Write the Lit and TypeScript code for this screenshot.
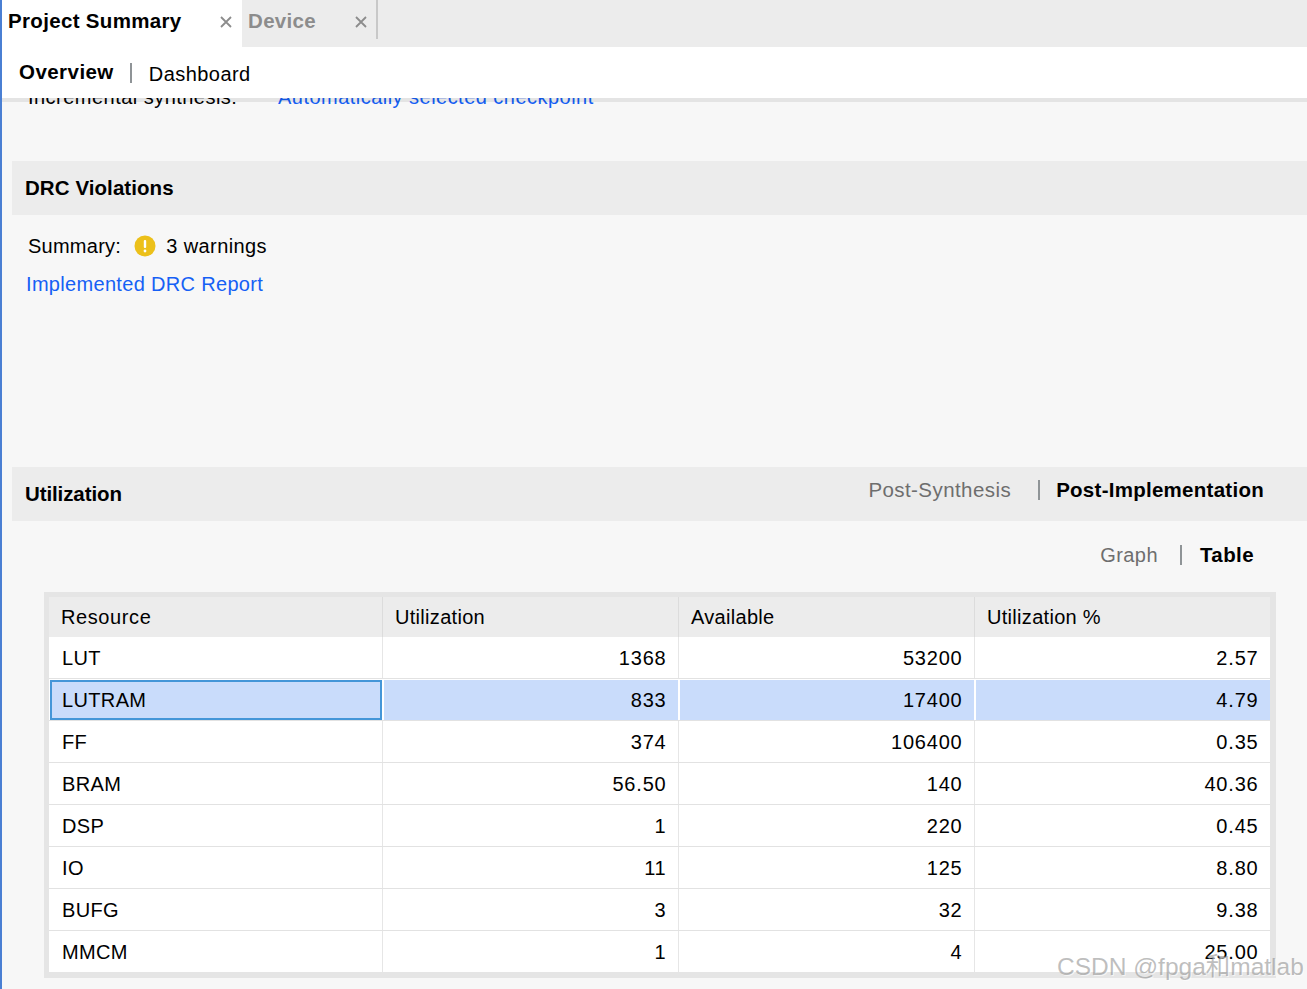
import { LitElement, html, css } from "lit";
import { customElement } from "lit/decorators.js";

const rows = [
  ["LUT", "1368", "53200", "2.57"],
  ["LUTRAM", "833", "17400", "4.79"],
  ["FF", "374", "106400", "0.35"],
  ["BRAM", "56.50", "140", "40.36"],
  ["DSP", "1", "220", "0.45"],
  ["IO", "11", "125", "8.80"],
  ["BUFG", "3", "32", "9.38"],
  ["MMCM", "1", "4", "25.00"],
];

@customElement("app-root")
export class AppRoot extends LitElement {
  static styles = css`
    :host {
      display: block;
      width: 1307px;
      height: 989px;
      overflow: hidden;
      position: relative;
      font-family: "Liberation Sans", Arial, sans-serif;
      font-size: 20px;
      color: #000;
      background: #f7f7f7;
    }
    .frame {
      height: 989px;
      border-left: 2px solid #4a7fd3;
      display: flex;
      flex-direction: column;
      box-sizing: border-box;
    }
    .tabs {
      height: 47px;
      background: #ececec;
      display: flex;
      flex: none;
    }
    .tab {
      width: 240px;
      height: 47px;
      display: flex;
      align-items: flex-start;
      box-sizing: border-box;
      padding: 9px 0 0 6px;
      font-weight: 700;
      font-size: 20.5px;
      letter-spacing: 0.33px;
      line-height: 24px;
      background: #fff;
    }
    .tab.off {
      width: 136px;
      height: 39px;
      background: #ececec;
      color: #8c8c8c;
      border-right: 2px solid #c8c8c8;
    }
    .tab .name { flex: 1; }
    .x {
      width: 12px;
      height: 12px;
      margin: 7px 10px 0 0;
      flex: none;
    }
    .tab.off .x { margin-right: 9px; }
    .subnav {
      height: 51px;
      flex: none;
      background: #fff;
      display: flex;
      align-items: center;
      padding: 0 0 0 17px;
      box-sizing: border-box;
      position: relative;
      z-index: 1;
      box-shadow: 0 4px 0 rgba(0, 0, 0, 0.075);
    }
    .subnav b { font-size: 20.5px; letter-spacing: 0.45px; margin-bottom: 2px; }
    .dash { letter-spacing: 0.45px; margin-top: 4px; }
    .pipe {
      width: 2px;
      height: 20px;
      background: #8f9497;
      margin: 0 16px;
      flex: none;
    }
    .subnav .pipe { margin: 0 17px 0 16px; }
    .body {
      flex: 1;
      overflow: hidden;
      display: flex;
      flex-direction: column;
      padding-left: 10px;
      min-height: 0;
    }
    .clipped {
      margin-top: -13px;
      height: 24px;
      line-height: 24px;
      padding-left: 16px;
      display: flex;
      flex: none;
      letter-spacing: 0.47px;
    }
    .clipped span:first-child { width: 250px; }
    a { color: #1560f5; text-decoration: none; }
    .band {
      height: 54px;
      flex: none;
      background: #ececec;
      display: flex;
      align-items: center;
      padding-left: 13px;
      font-weight: 700;
      font-size: 20.5px;
    }
    .drc { margin-top: 52px; letter-spacing: 0.07px; }
    .summary {
      display: flex;
      align-items: center;
      height: 24px;
      margin: 19px 0 0 16px;
      letter-spacing: 0.25px;
    }
    .warn { width: 22px; height: 22px; margin: 0 10px 0 13px; flex: none; }
    .warnings { letter-spacing: 0.42px; }
    .report { margin: 14px 0 0 14px; height: 24px; line-height: 24px; letter-spacing: 0.32px; }
    .util { margin-top: 171px; }
    .util .title { flex: 1; letter-spacing: -0.1px; }
    .switch {
      display: flex;
      align-items: center;
      font-weight: 400;
      color: #6e6e6e;
      letter-spacing: 0.43px;
    }
    .switch b { color: #000; font-size: 20.5px; letter-spacing: 0.27px; }
    .util .switch { margin: -8px 43px 0 0; }
    .util .switch .pipe { margin: 0 16px 0 27px; }
    .views { justify-content: flex-end; margin: 22px 53px 0 0; height: 24px; flex: none; }
    .views .pipe { margin: 0 18px 0 22px; }
    .views b { letter-spacing: 0.4px; }
    .grid {
      margin: 25px 0 0 32px;
      width: 1232px;
      box-sizing: border-box;
      border: solid #e5e5e5;
      border-width: 5px 6px 6px 5px;
      background: #fff;
      flex: none;
    }
    .row {
      display: grid;
      grid-template-columns: 334px 296px 296px 295px;
      height: 42px;
      box-sizing: border-box;
      border-bottom: 1px solid #e2e2e2;
      letter-spacing: 0.8px;
    }
    .row:last-child { border-bottom: 0; height: 41px; }
    .cell {
      display: flex;
      align-items: center;
      justify-content: flex-end;
      padding: 2px 11.5px 0 12px;
      border-right: 1px solid #e6e6e6;
      box-sizing: border-box;
      min-width: 0;
    }
    .cell:first-child {
      justify-content: flex-start;
      padding-left: 13px;
      letter-spacing: 0.35px;
    }
    .cell:last-child { border-right: 0; }
    .head {
      height: 40px;
      background: #ececec;
      border-bottom: 0;
      letter-spacing: 0.3px;
    }
    .head .cell {
      justify-content: flex-start;
      padding-top: 0;
      border-right-color: #dcdcdc;
    }
    .head .cell:first-child { padding-left: 12px; letter-spacing: 0.6px; }
    .row.sel { border-top: 1px solid #fff; }
    .sel .cell {
      background: #c9dcfb;
      background-clip: padding-box;
      border-left: 1px solid #fff;
      border-right: 1px solid #fff;
      padding-top: 0;
      padding-left: 11px;
    }
    .sel .cell:last-child { border-right: 0; }
    .sel .cell:first-child {
      margin-left: 1px;
      padding-left: 12px;
      border-left: 0;
      box-shadow: inset 0 0 0 2px #4496d8;
    }
    .mark {
      position: absolute;
      left: 1057px;
      top: 952px;
      font-size: 24.5px;
      line-height: 30px;
      color: rgba(125, 125, 125, 0.5);
      text-shadow: 1px 1px 0 rgba(255, 255, 255, 0.6);
      font-family: "Liberation Sans", "Noto Sans CJK SC", sans-serif;
      white-space: nowrap;
    }
  `;

  private closeIcon() {
    return html`<svg class="x" viewBox="0 0 12 12"><path d="M1 1 11 11M11 1 1 11" stroke="#8c8c8c" stroke-width="1.8" fill="none"/></svg>`;
  }

  render() {
    return html`
      <div class="frame">
        <div class="tabs">
          <div class="tab"><span class="name">Project Summary</span>${this.closeIcon()}</div>
          <div class="tab off"><span class="name">Device</span>${this.closeIcon()}</div>
        </div>
        <div class="subnav"><b>Overview</b><span class="pipe"></span><span class="dash">Dashboard</span></div>
        <div class="body">
          <div class="clipped"><span>Incremental synthesis:</span><a>Automatically selected checkpoint</a></div>
          <div class="band drc">DRC Violations</div>
          <div class="summary"><span>Summary:</span>
            <svg class="warn" viewBox="0 0 22 22"><circle cx="11" cy="11" r="10.5" fill="#ecc01a"/><rect x="9.8" y="5" width="2.4" height="8" rx="1" fill="#fff"/><circle cx="11" cy="16" r="1.4" fill="#fff"/></svg>
            <span class="warnings">3 warnings</span></div>
          <div class="report"><a>Implemented DRC Report</a></div>
          <div class="band util"><span class="title">Utilization</span>
            <div class="switch"><span>Post-Synthesis</span><span class="pipe"></span><b>Post-Implementation</b></div>
          </div>
          <div class="switch views"><span>Graph</span><span class="pipe"></span><b>Table</b></div>
          <div class="grid">
            <div class="row head"><div class="cell">Resource</div><div class="cell">Utilization</div><div class="cell">Available</div><div class="cell">Utilization %</div></div>
            ${rows.map(
              (r, i) => html`<div class="row ${i === 1 ? "sel" : ""}">${r.map((c) => html`<div class="cell">${c}</div>`)}</div>`
            )}
          </div>
        </div>
      </div>
      <div class="mark">CSDN @fpga和matlab</div>
    `;
  }
}
